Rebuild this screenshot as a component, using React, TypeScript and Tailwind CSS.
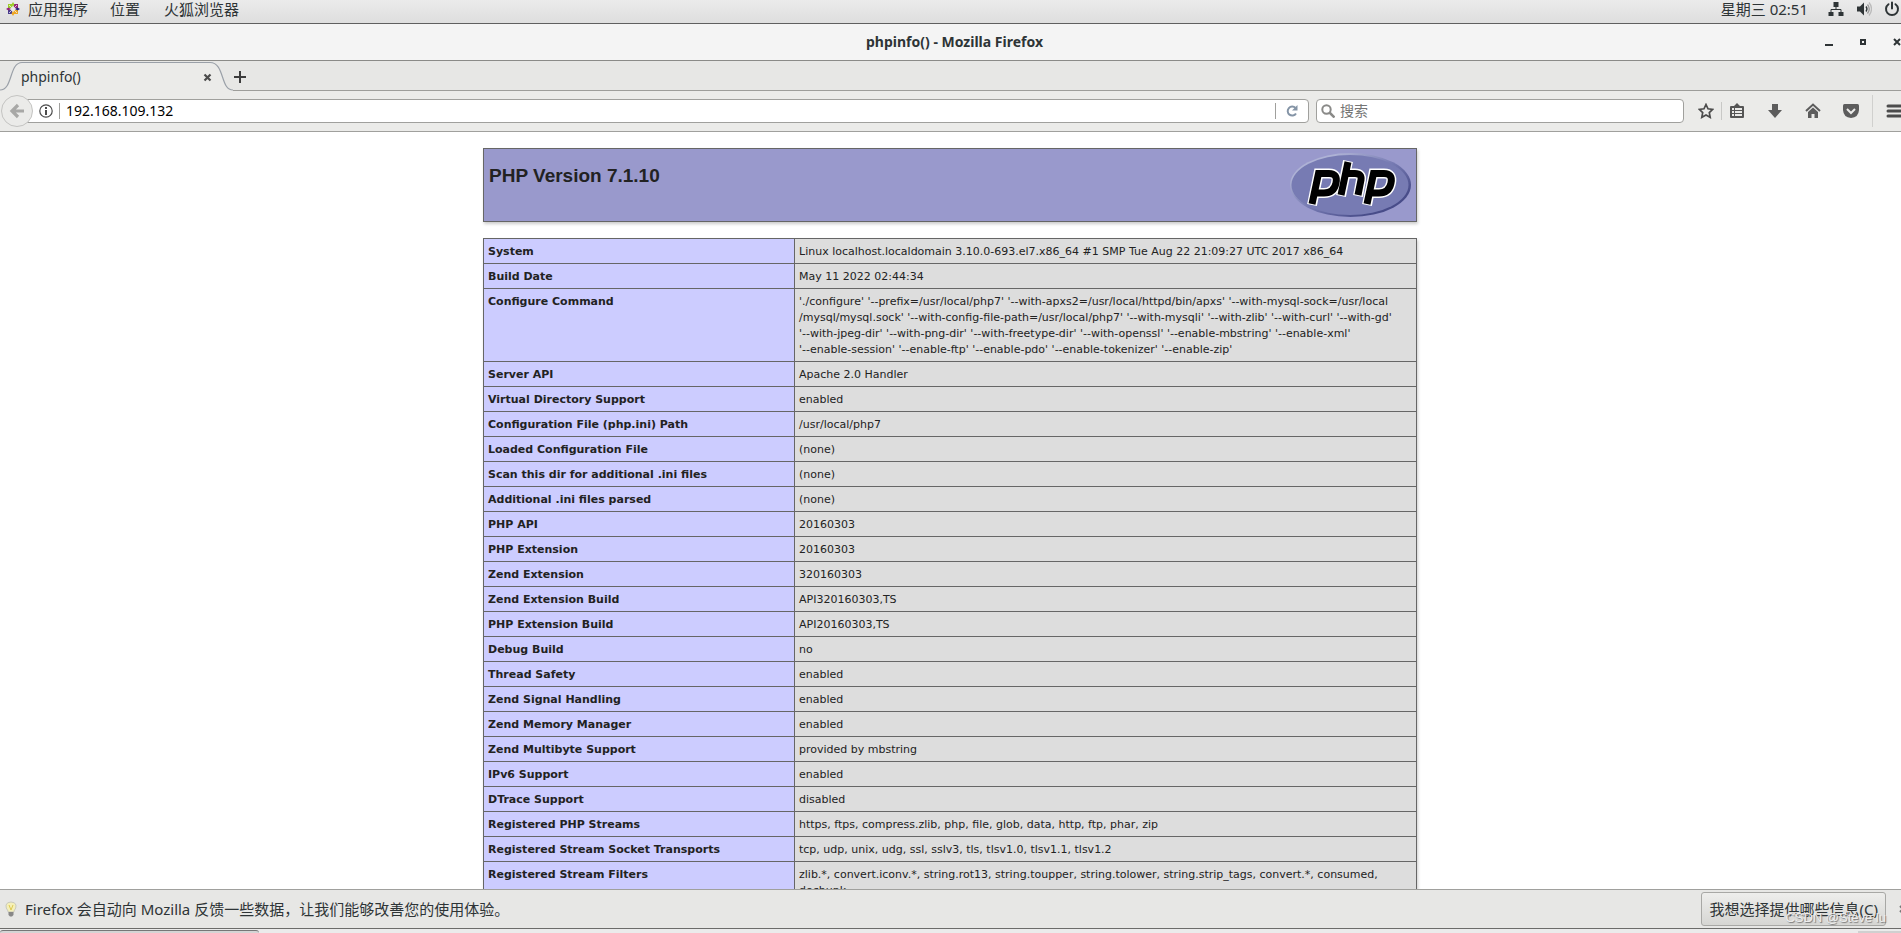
const rows: [string, string][] = [
  ["System", "Linux localhost.localdomain 3.10.0-693.el7.x86_64 #1 SMP Tue Aug 22 21:09:27 UTC 2017 x86_64"],
  ["Build Date", "May 11 2022 02:44:34"],
  [
    "Configure Command",
    "'./configure' '--prefix=/usr/local/php7' '--with-apxs2=/usr/local/httpd/bin/apxs' '--with-mysql-sock=/usr/local\n/mysql/mysql.sock' '--with-config-file-path=/usr/local/php7' '--with-mysqli' '--with-zlib' '--with-curl' '--with-gd'\n'--with-jpeg-dir' '--with-png-dir' '--with-freetype-dir' '--with-openssl' '--enable-mbstring' '--enable-xml'\n'--enable-session' '--enable-ftp' '--enable-pdo' '--enable-tokenizer' '--enable-zip'",
  ],
  ["Server API", "Apache 2.0 Handler"],
  ["Virtual Directory Support", "enabled"],
  ["Configuration File (php.ini) Path", "/usr/local/php7"],
  ["Loaded Configuration File", "(none)"],
  ["Scan this dir for additional .ini files", "(none)"],
  ["Additional .ini files parsed", "(none)"],
  ["PHP API", "20160303"],
  ["PHP Extension", "20160303"],
  ["Zend Extension", "320160303"],
  ["Zend Extension Build", "API320160303,TS"],
  ["PHP Extension Build", "API20160303,TS"],
  ["Debug Build", "no"],
  ["Thread Safety", "enabled"],
  ["Zend Signal Handling", "enabled"],
  ["Zend Memory Manager", "enabled"],
  ["Zend Multibyte Support", "provided by mbstring"],
  ["IPv6 Support", "enabled"],
  ["DTrace Support", "disabled"],
  ["Registered PHP Streams", "https, ftps, compress.zlib, php, file, glob, data, http, ftp, phar, zip"],
  ["Registered Stream Socket Transports", "tcp, udp, unix, udg, ssl, sslv3, tls, tlsv1.0, tlsv1.1, tlsv1.2"],
  [
    "Registered Stream Filters",
    "zlib.*, convert.iconv.*, string.rot13, string.toupper, string.tolower, string.strip_tags, convert.*, consumed,\ndechunk",
  ],
];

function CentosIcon() {
  return (
    <svg viewBox="0 0 14 14" className="h-[14px] w-[14px]" aria-hidden="true">
      <path d="M2 2h4v4H2z" fill="#9ccd2a" />
      <path d="M8 2h4v4H8z" fill="#932279" />
      <path d="M2 8h4v4H2z" fill="#4a3d8f" />
      <path d="M8 8h4v4H8z" fill="#efa724" />
      <path d="M7 0l1.500 2.500L7 5 5.500 2.500z" fill="#9ccd2a" />
      <path d="M14 7l-2.500 1.500L9 7l2.500-1.500z" fill="#262577" />
      <path d="M7 14l-1.500-2.500L7 9l1.500 2.500z" fill="#efa724" />
      <path d="M0 7l2.500-1.500L5 7 2.500 8.500z" fill="#932279" />
      <path d="M3 3l8 8M11 3l-8 8" stroke="#eee" strokeWidth="0.8" />
    </svg>
  );
}

function NetworkIcon() {
  return (
    <svg viewBox="0 0 16 16" className="h-4 w-4" fill="#2e3436" aria-hidden="true">
      <path d="M5.500 1h5v5h-5zM0.500 11h5v4h-5zM10.500 11h5v4h-5z" />
      <path d="M8 6v2.500M3 11V8.500h10V11" fill="none" stroke="#2e3436" />
    </svg>
  );
}

function VolumeIcon() {
  return (
    <svg viewBox="0 0 16 16" className="h-4 w-4" fill="none" aria-hidden="true">
      <path d="M1 5.500h3l4-4v13l-4-4H1z" fill="#2e3436" />
      <path d="M10 5.500q2 2.500 0 5" stroke="#2e3436" strokeWidth="1.300" />
      <path d="M11.500 3.500q3.500 4.500 0 9" stroke="#999" strokeWidth="1.300" />
      <path d="M13 1.500q5 6.500 0 13" stroke="#bbb" strokeWidth="1.300" />
    </svg>
  );
}

function PowerIcon() {
  return (
    <svg viewBox="0 0 16 16" className="h-4 w-4" fill="none" stroke="#2e3436" strokeWidth="2" strokeLinecap="round" aria-hidden="true">
      <path d="M4.500 3.200a6 6 0 1 0 7 0M8 1.500v6" />
    </svg>
  );
}

function TopBar() {
  return (
    <div className="flex h-6 items-start justify-between border-b border-[#5f5f5f] bg-linear-to-b from-[#ebebeb] to-[#dedede] pl-[6px] text-[15px] leading-[18px] text-[#2e3436]">
      <nav className="flex">
        <button className="flex h-[18px] items-center gap-2">
          <CentosIcon />
          应用程序
        </button>
        <button className="ml-[22px] h-[18px]">位置</button>
        <button className="ml-6 h-[18px]">火狐浏览器</button>
      </nav>
      <div className="flex h-[18px] items-center">
        <button className="mr-5">星期三 02:51</button>
        <button className="mr-3" aria-label="Network"><NetworkIcon /></button>
        <button className="mr-3" aria-label="Volume"><VolumeIcon /></button>
        <button className="mr-px" aria-label="Power"><PowerIcon /></button>
      </div>
    </div>
  );
}

function TitleBar() {
  return (
    <div className="flex h-[37px] border-b border-[#8b8b88] bg-[#f4f4f4] text-[#2e3436]">
      <div className="w-[76px] shrink-0" />
      <h1 className="flex-1 pl-2 text-center text-sm leading-9 font-bold">phpinfo() - Mozilla Firefox</h1>
      <div className="flex w-[76px] shrink-0 items-center justify-between">
        <button aria-label="Minimize">
          <svg width="8" height="8"><path d="M0 6h8v2H0z" fill="#2e3436" /></svg>
        </button>
        <button aria-label="Restore">
          <svg width="6" height="6"><path d="M1 1h4v4H1z" fill="none" stroke="#2e3436" strokeWidth="2" /></svg>
        </button>
        <button aria-label="Close">
          <svg width="8" height="8"><path d="M1 1l6 6M7 1l-6 6" stroke="#2e3436" strokeWidth="2" /></svg>
        </button>
      </div>
    </div>
  );
}

function TabBar() {
  return (
    <div className="relative flex h-[30px] border-b border-[#9d9d9a] bg-[#e7e7e5]">
      <svg width="234" height="30" className="absolute top-0 left-0" fill="#ebebe9" aria-hidden="true">
        <path d="M0 30V29C13 29 9 1.500 22 1.500H210C225 1.500 220 29 233 29V30z" />
        <path d="M0 29C13 29 9 1.500 22 1.500H210C225 1.500 220 29 233 29" fill="none" stroke="#9aa0a8" strokeWidth="1.200" />
      </svg>
      <div className="relative flex w-[233px] items-center justify-between pt-[3px] pr-[21px] pl-[21px] text-sm text-[#2e3436]">
        <span>phpinfo()</span>
        <button aria-label="Close tab">
          <svg width="9" height="9"><path d="M1.500 1.500l6 6M7.500 1.500l-6 6" stroke="#4c4c4c" strokeWidth="2.200" /></svg>
        </button>
      </div>
      <button aria-label="New tab" className="pt-[3px]">
        <svg width="14" height="14"><path d="M7 1v12M1 7h12" stroke="#3c3c3c" strokeWidth="2" /></svg>
      </button>
    </div>
  );
}

function NavBar() {
  return (
    <div className="flex h-[41px] items-center border-b border-[#a0a09d] bg-[#ebebe9]">
      <button aria-label="Back" className="z-10 ml-px flex h-8 w-8 items-center justify-center rounded-full border border-[#c4c4c2] bg-[#ebebe9]">
        <svg width="16" height="16" fill="none" stroke="#a8a8a6" strokeWidth="3.200"><path d="M9 2L3 8l6 6M3 8h12" /></svg>
      </button>
      <div className="-ml-4 flex h-6 flex-1 items-center rounded-sm border border-[#a0a09d] bg-white pl-[21px]">
        <svg width="14" height="14" aria-hidden="true">
          <circle cx="7" cy="7" r="6.200" fill="none" stroke="#4c4c4c" strokeWidth="1.200" />
          <path d="M6 6h2v5H6zM6 3h2v2H6z" fill="#4c4c4c" />
        </svg>
        <span className="mx-[6px] h-4 w-px bg-[#a0a09d]" />
        <input aria-label="Address" defaultValue="192.168.109.132" className="min-w-0 flex-1 text-sm text-black outline-none" />
        <span className="h-4 w-px bg-[#a0a09d]" />
        <button aria-label="Reload" className="px-[10px]">
          <svg width="12" height="12" fill="none" aria-hidden="true">
            <path d="M9.500 3A4.500 4.500 0 1 0 10 8.500" stroke="#8494a6" strokeWidth="2" />
            <path d="M11.500 0v5.500H6z" fill="#8494a6" />
          </svg>
        </button>
      </div>
      <div className="ml-[7px] flex h-6 w-[368px] items-center rounded-sm border border-[#a0a09d] bg-white pl-1">
        <svg width="14" height="14" fill="none" stroke="#8a8a88" aria-hidden="true">
          <circle cx="5.500" cy="5.500" r="4.200" strokeWidth="2" />
          <path d="M8.500 8.500l5 5" strokeWidth="2.500" />
        </svg>
        <input aria-label="搜索" placeholder="搜索" className="ml-[5px] min-w-0 flex-1 text-sm outline-none placeholder:text-[#757575]" />
      </div>
      <div className="ml-[14px] flex h-full shrink-0 items-center">
        <button aria-label="Bookmark">
          <svg width="16" height="16"><path d="M8 1.500l2 4.300 4.700.6-3.400 3.200.9 4.700L8 12l-4.200 2.300.9-4.700L1.300 6.400 6 5.800z" fill="none" stroke="#4c4c4c" strokeWidth="1.700" /></svg>
        </button>
        <span className="mx-[7px] h-[18px] w-px bg-[#c8c8c6]" />
        <button aria-label="Bookmarks menu">
          <svg width="16" height="16">
            <path d="M2 3h3l3-3 3 3h3q1 0 1 1v10q0 1-1 1H2q-1 0-1-1V4q0-1 1-1z" fill="#555" />
            <path d="M3 5h2v2H3zM6 5h7v2H6zM3 8h2v2H3zM6 8h7v2H6zM3 11h2v2H3zM6 11h7v2H6z" fill="#ebebe9" />
          </svg>
        </button>
        <button aria-label="Downloads" className="ml-[22px]">
          <svg width="16" height="16"><path d="M5 1h6v6h4l-7 8-7-8h4z" fill="#5c5c5c" /></svg>
        </button>
        <button aria-label="Home" className="ml-[22px]">
          <svg width="16" height="16">
            <path d="M1 8l7-6.500L15 8" fill="none" stroke="#5c5c5c" strokeWidth="2" />
            <path d="M8 4.500l5 4.500v6H9.500v-4h-3v4H3V9z" fill="#5c5c5c" />
          </svg>
        </button>
        <button aria-label="Pocket" className="ml-[22px]">
          <svg width="16" height="16">
            <path d="M0 2.500Q0 1 1.500 1h13Q16 1 16 2.500V7Q15.500 14.500 8 15 .5 14.500 0 7z" fill="#5c5c5c" />
            <path d="M4 6l4 4 4-4" fill="none" stroke="#ebebe9" strokeWidth="2" />
          </svg>
        </button>
        <span className="mx-[13px] h-8 w-px bg-[#d0d0ce]" />
        <button aria-label="Menu">
          <svg width="15" height="16"><path d="M2 3h14M2 8h14M2 13h14" stroke="#4c4c4c" strokeWidth="3" strokeLinecap="round" /></svg>
        </button>
      </div>
    </div>
  );
}

function PhpLogo() {
  return (
    <svg width="121" height="65" viewBox="0 0 121 65" role="img" aria-label="PHP logo">
      <defs>
        <linearGradient id="rim" x1="0" y1="0" x2="1" y2="1">
          <stop offset="0.2" stopColor="#aeb2d5" />
          <stop offset="0.5" stopColor="#777bb3" />
          <stop offset="0.8" stopColor="#484c89" />
        </linearGradient>
      </defs>
      <ellipse cx="60.500" cy="32" rx="60.500" ry="32" fill="url(#rim)" />
      <ellipse cx="60" cy="32" rx="58.500" ry="30" fill="#777bb3" />
      <g fill="none" strokeLinejoin="miter">
        <g stroke="#fff" strokeWidth="10">
          <path d="M22 52L28.500 20.500H39Q48 20.500 46 30Q44 40 34 40H26" />
          <path d="M51 43L58 8M56 20.500H65Q72 20.500 71 27L68 43" />
          <path d="M77 52L83.500 20.500H94Q103 20.500 101 30Q99 40 89 40H81" />
        </g>
        <g stroke="#000" strokeWidth="7">
          <path d="M22 51L28.500 20.500H39Q48 20.500 46 30Q44 40 34 40H26" />
          <path d="M51 42L58 9M56 20.500H65Q72 20.500 71 27L68 42" />
          <path d="M77 51L83.500 20.500H94Q103 20.500 101 30Q99 40 89 40H81" />
        </g>
      </g>
    </svg>
  );
}

function PhpInfo() {
  return (
    <main className="min-h-0 flex-1 overflow-hidden bg-white pt-4 pr-px text-[#222]">
      <div className="mx-auto flex h-[74px] w-[934px] justify-between border border-[#666] bg-[#9999cc] pt-1 pr-[5px] pl-[5px] shadow-[1px_2px_3px_#ccc]">
        <h2 className="pt-[11px] font-['Liberation_Sans',Arial,sans-serif] text-[19px] leading-6 font-bold">PHP Version 7.1.10</h2>
        <PhpLogo />
      </div>
      <table className="mx-auto mt-4 w-[934px] border-collapse text-left font-['DejaVu_Sans',Verdana,sans-serif] text-[11px] leading-4 shadow-[1px_2px_3px_#ccc]">
        <tbody>
          {rows.map(([label, value]) => (
            <tr key={label}>
              <th scope="row" className="w-[311px] border border-[#666] bg-[#ccccff] px-1 pt-[5px] pb-[3px] align-top font-bold">{label}</th>
              <td className="border border-[#666] bg-[#ddd] px-1 pt-[5px] pb-[3px] align-top whitespace-pre-line">{value}</td>
            </tr>
          ))}
        </tbody>
      </table>
    </main>
  );
}

function NoticeBar() {
  return (
    <div className="flex h-10 items-center border-t border-b border-t-[#a0a09d] border-b-[#6c6c6a] bg-[#e7e7e5] pl-1 text-[15px] text-[#2e3436]">
      <svg width="14" height="16" fill="none" aria-hidden="true">
        <path d="M4 10Q1.500 7 2 4 3 1 7 1t5 3q.5 3-2 6v1H4z" fill="#f5f0b8" stroke="#c9c9bd" />
        <path d="M5 4l2 5 2-5" stroke="#ddc850" />
        <path d="M4.500 11h5v3L8 15.500H6L4.500 14z" fill="#888" />
      </svg>
      <span className="ml-[7px] flex-1">Firefox 会自动向 Mozilla 反馈一些数据，让我们能够改善您的使用体验。</span>
      <div className="relative">
        <button className="h-[34px] rounded-[3px] border border-[#a8a8a5] bg-linear-to-b from-[#eeeeec] to-[#d6d6d3] px-[7px]">
          我想选择提供哪些信息(<u>C</u>)
        </button>
        <span className="absolute right-0 -bottom-px font-['Liberation_Sans',sans-serif] text-[13px] whitespace-nowrap text-[#eee] [text-shadow:1px_1px_1px_#777]">CSDN @Steve lu</span>
      </div>
      <button aria-label="Close notice" className="ml-[13px] w-[2px] overflow-hidden">
        <svg width="9" height="9"><path d="M1 1l6 6M7 1l-6 6" stroke="#777" strokeWidth="2" /></svg>
      </button>
    </div>
  );
}

export default function App() {
  return (
    <div className="flex h-screen flex-col overflow-hidden font-['Noto_Sans','Noto_Sans_CJK_SC',sans-serif]">
      <TopBar />
      <TitleBar />
      <TabBar />
      <NavBar />
      <PhpInfo />
      <NoticeBar />
      <div className="flex h-1 justify-between bg-[#ebebeb]">
        <div className="mt-px w-[259px] rounded-t-sm border-t border-[#777] bg-[#d5d5d5]" />
        <div className="mt-[2px] w-[43px] bg-[#d0d0d0]" />
      </div>
    </div>
  );
}
